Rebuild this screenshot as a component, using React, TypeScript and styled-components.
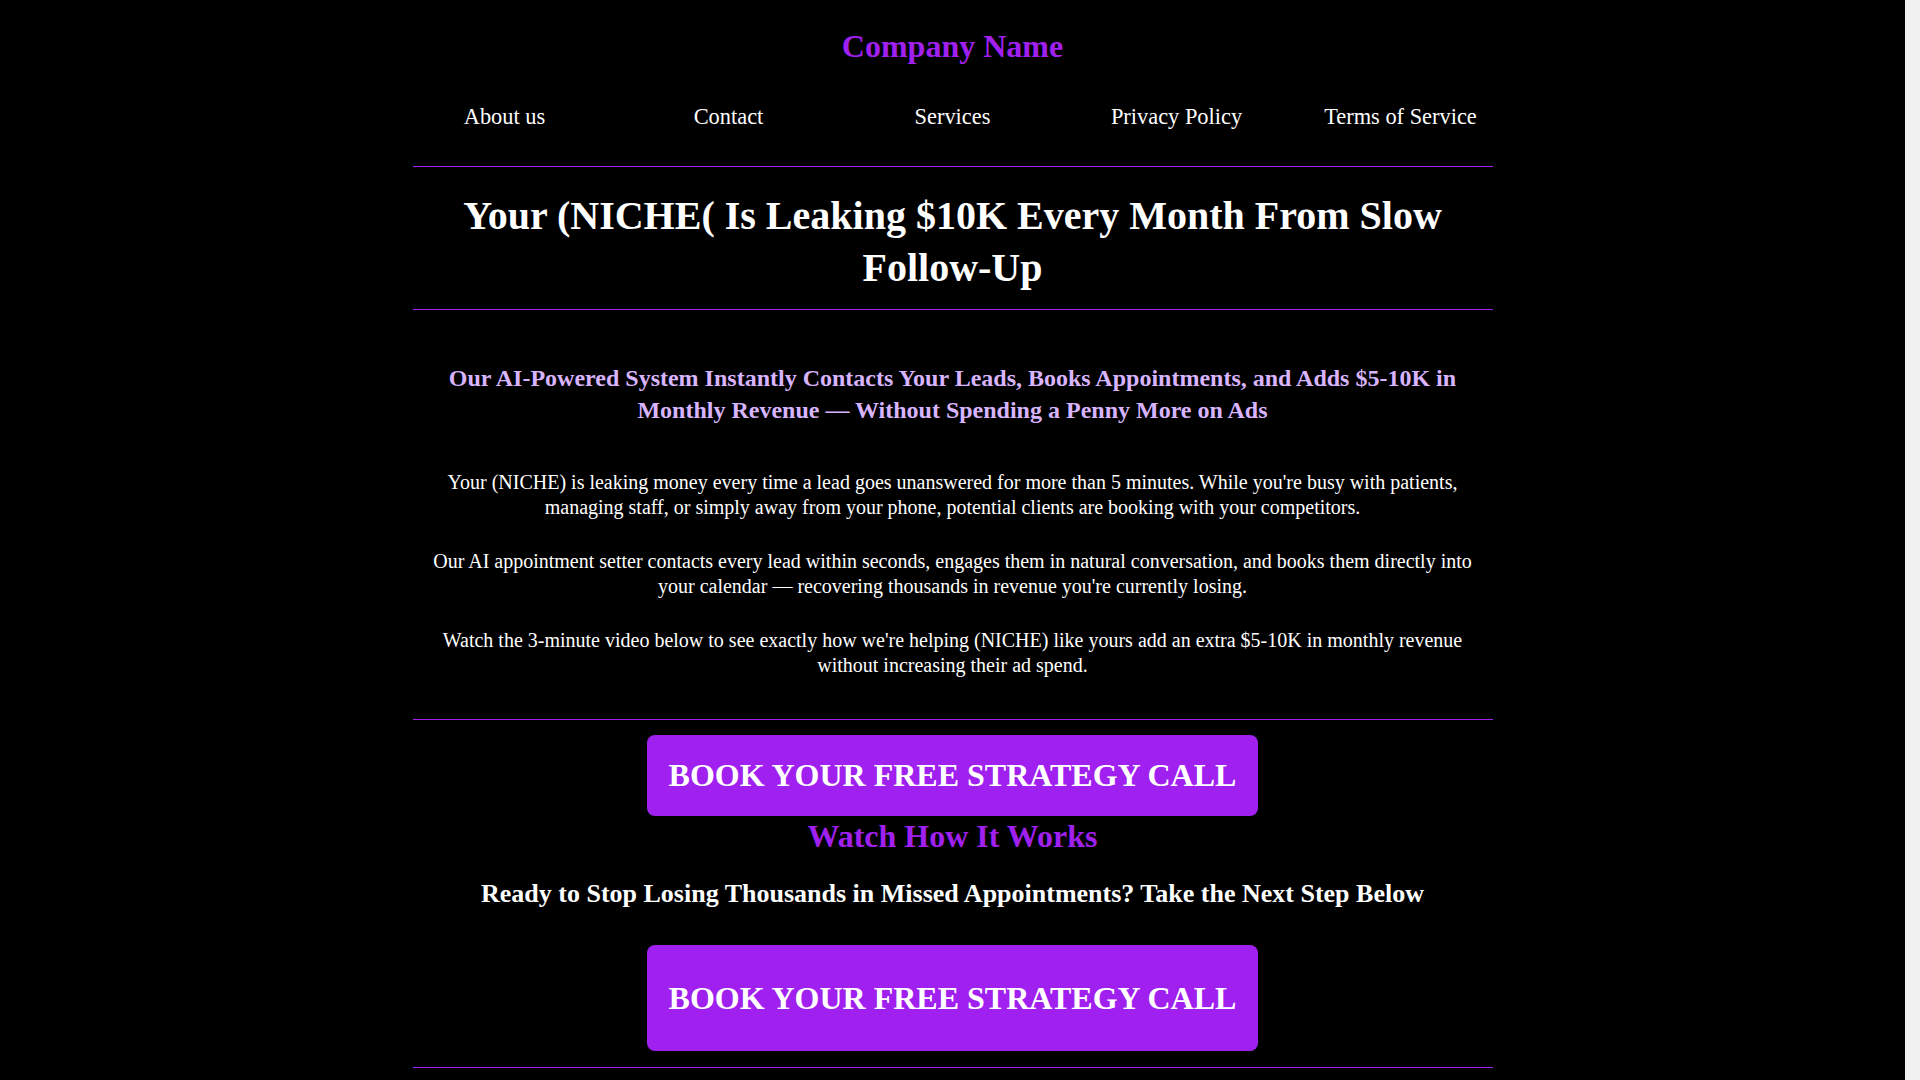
import React from 'react';
import styled, { createGlobalStyle } from 'styled-components';

const purple = '#a020f0';

const GlobalStyle = createGlobalStyle`
  html, body {
    margin: 0;
    padding: 0;
    background: #000;
  }
  body {
    color: #fff;
    font-family: 'Liberation Serif', 'Times New Roman', serif;
    padding-right: 15px;
  }
  /* stand-in for the page scrollbar gutter seen in the reference */
  body::after {
    content: '';
    position: fixed;
    top: 0;
    right: 0;
    bottom: 0;
    width: 15px;
    background: #f1f1f1;
  }
  * {
    box-sizing: border-box;
  }
`;

const navLinks = ['About us', 'Contact', 'Services', 'Privacy Policy', 'Terms of Service'];

const paragraphs = [
  "Your (NICHE) is leaking money every time a lead goes unanswered for more than 5 minutes. While you're busy with patients, managing staff, or simply away from your phone, potential clients are booking with your competitors.",
  "Our AI appointment setter contacts every lead within seconds, engages them in natural conversation, and books them directly into your calendar — recovering thousands in revenue you're currently losing.",
  "Watch the 3-minute video below to see exactly how we're helping (NICHE) like yours add an extra $5-10K in monthly revenue without increasing their ad spend.",
];

const App = () => {
  return (
    <>
      <GlobalStyle />
      <Page>
        <Header>
          <Brand>Company Name</Brand>
          <Nav>
            {navLinks.map((label) => (
              <NavItem key={label} href="#">
                {label}
              </NavItem>
            ))}
          </Nav>
        </Header>

        <Hero>
          <Title>Your (NICHE( Is Leaking $10K Every Month From Slow Follow-Up</Title>
        </Hero>

        <Intro>
          <Subhead>
            Our AI-Powered System Instantly Contacts Your Leads, Books Appointments, and Adds $5-10K in
            Monthly Revenue — Without Spending a Penny More on Ads
          </Subhead>
          <Copy>
            {paragraphs.map((text, i) => (
              <Paragraph key={i}>{text}</Paragraph>
            ))}
          </Copy>
        </Intro>

        <Cta>
          <BookButton href="#">BOOK YOUR FREE STRATEGY CALL</BookButton>
          <VideoTitle>Watch How It Works</VideoTitle>
          <NextStep>
            Ready to Stop Losing Thousands in Missed Appointments? Take the Next Step Below
          </NextStep>
          <BookButton href="#" $tall>
            BOOK YOUR FREE STRATEGY CALL
          </BookButton>
        </Cta>

        <Footer>© Company Name. All rights reserved.</Footer>
      </Page>
    </>
  );
};

const Page = styled.div`
  max-width: 1080px;
  margin: 0 auto;
  text-align: center;
`;

const Header = styled.header`
  padding: 27.5px 0 36.4px;
  border-bottom: 1px solid ${purple};
`;

const Brand = styled.h1`
  margin: 0;
  font-size: 32px;
  line-height: 37px;
  font-weight: 700;
  color: ${purple};
`;

const Nav = styled.nav`
  display: flex;
  gap: 40px;
  margin-top: 39.6px;
`;

const NavItem = styled.a`
  flex: 1;
  font-size: 22.4px;
  line-height: 25.8px;
  color: #fff;
  text-decoration: none;
  white-space: nowrap;
`;

const Hero = styled.section`
  padding: 23px 0 15.5px;
  border-bottom: 1px solid ${purple};
`;

const Title = styled.h2`
  margin: 0;
  font-size: 40px;
  line-height: 51.4px;
  font-weight: 700;
  color: #fff;
`;

const Intro = styled.section`
  padding: 52px 0 40px;
  border-bottom: 1px solid ${purple};
`;

const Subhead = styled.h3`
  margin: 0;
  font-size: 24px;
  line-height: 32px;
  font-weight: 700;
  color: #d8b4fe;
`;

const Copy = styled.div`
  display: flex;
  flex-direction: column;
  gap: 27.8px;
  margin-top: 44.2px;
`;

const Paragraph = styled.p`
  margin: 0;
  font-size: 20px;
  line-height: 25.6px;
  color: #fff;
`;

const Cta = styled.section`
  display: flex;
  flex-direction: column;
  align-items: center;
  padding: 15px 0 16px;
  border-bottom: 1px solid ${purple};
`;

const BookButton = styled.a<{ $tall?: boolean }>`
  display: inline-block;
  padding: ${(p) => (p.$tall ? '34.4px 22px' : '22px')};
  margin-top: ${(p) => (p.$tall ? '35.6px' : '0')};
  background: ${purple};
  border-radius: 8px;
  font-size: 32px;
  line-height: 36.8px;
  font-weight: 700;
  color: #fff;
  text-decoration: none;
  white-space: nowrap;
`;

const VideoTitle = styled.h2`
  margin: 2.2px 0 0;
  font-size: 32px;
  line-height: 36.8px;
  font-weight: 700;
  color: ${purple};
`;

const NextStep = styled.h3`
  margin: 23px 0 0;
  font-size: 26px;
  line-height: 32px;
  font-weight: 700;
  color: #fff;
`;

const Footer = styled.footer`
  padding: 24px 0 40px;
  font-size: 18px;
  color: #bbb;
`;

export default App;
